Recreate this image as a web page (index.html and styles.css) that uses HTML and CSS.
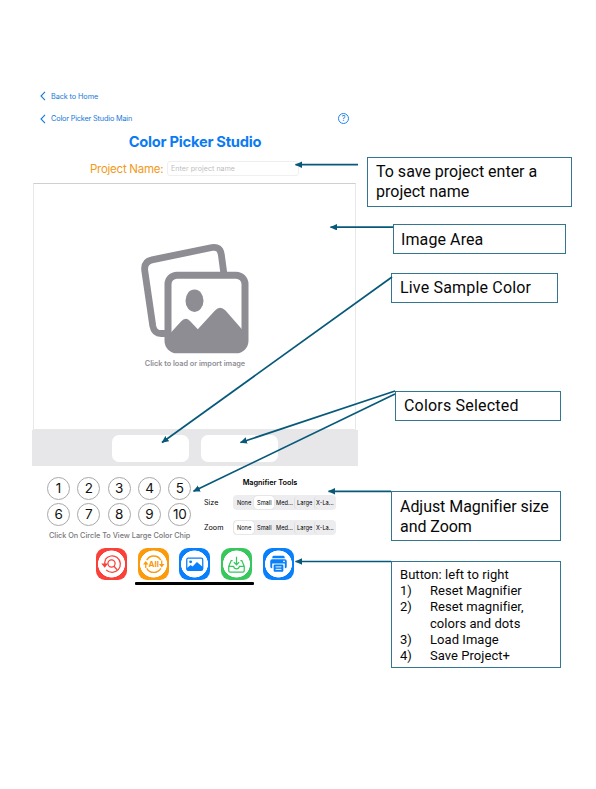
FILE: index.html
```html
<!DOCTYPE html>
<html lang="en">
<head>
<meta charset="utf-8">
<title>Color Picker Studio guide</title>
<link rel="stylesheet" href="styles.css">
</head>
<body>
<main class="page">
  <section class="app">
    <nav class="nav">
      <a class="back"><svg width="6" height="10" viewBox="0 0 6 10"><path d="M5 .8 1 5l4 4.2"/></svg><span class="t-home">Back to Home</span></a>
      <div class="nav-row">
        <a class="back"><svg width="6" height="10" viewBox="0 0 6 10"><path d="M5 .8 1 5l4 4.2"/></svg><span class="t-main">Color Picker Studio Main</span></a>
        <span class="help">?</span>
      </div>
    </nav>
    <h1><span>Color Picker Studio</span></h1>
    <div class="project"><span class="project-label">Project Name:</span><span class="field">Enter project name</span></div>
    <div class="image-area">
      <svg class="photos" width="110" height="112" viewBox="0 0 110 112">
        <path d="M26 90.500H21Q14.200 90.500 12.800 83L4.800 28Q3.500 18.500 12 16.800L72 4.500Q80 3 81.300 11.500L83.800 30" fill="none" stroke="#8e8d93" stroke-width="6.800"/>
        <rect x="28" y="32.200" width="77" height="74.600" rx="9" fill="#fff" stroke="#8e8d93" stroke-width="7"/>
        <ellipse cx="54.500" cy="57.700" rx="9" ry="11.200" fill="#8e8d93"/>
        <path d="M30 90.500 41 78.500Q45.500 73.500 50 78L57.800 86.300 75 67.500Q80 62 85.500 67.500L103 87.500V105H30Z" fill="#8e8d93"/>
      </svg>
      <span class="caption">Click to load or import image</span>
    </div>
    <div class="samples"><i></i><i></i></div>
    <div class="tools">
      <div class="colors">
        <div class="circles"><b>1</b><b>2</b><b>3</b><b>4</b><b>5</b><b>6</b><b>7</b><b>8</b><b>9</b><b>10</b></div>
        <span class="hint">Click On Circle To View Large Color Chip</span>
      </div>
      <div class="magnifier">
        <h2>Magnifier Tools</h2>
        <div class="tool-row"><label>Size</label><div class="segments"><span>None</span><span class="on">Small</span><span>Med...</span><span>Large</span><span>X-La...</span></div></div>
        <div class="tool-row"><label>Zoom</label><div class="segments"><span class="on">None</span><span>Small</span><span>Med...</span><span>Large</span><span>X-La...</span></div></div>
      </div>
    </div>
    <div class="buttons">
      <span class="btn red"><svg viewBox="0 0 32 32"><path d="M9.500 11.500A8.500 8.500 0 1 1 10.500 22"/><path class="fill" d="m5.500 15.500 3.500 4.300 3.500-4.300z"/><path d="M9 16.500q-.2-2.500.8-5"/><circle cx="16" cy="15.500" r="3.700"/><path d="m18.600 18.300 3.200 3.700"/></svg></span>
      <span class="btn orange"><svg viewBox="0 0 32 32"><path d="M9 12A8.300 8.300 0 0 1 23.500 12M23.500 20.500A8.300 8.300 0 0 1 9 20.500"/><path d="M8 20v-5M24.500 12.500v5"/><path class="fill" d="m5.200 16.500 2.800-3.700 2.800 3.700zM21.700 16l2.800 3.700 2.800-3.700z"/><text x="16.200" y="19.200">All</text></svg></span>
      <span class="btn blue"><svg viewBox="0 0 32 32"><rect x="8" y="10" width="16.500" height="12.500" rx="1.500"/><circle class="fill" cx="12" cy="13.800" r="1.500"/><path class="fill" d="m8 20.500 4-3.500 2 1.700 4.500-4.700 6 5v3.500H8z"/></svg></span>
      <span class="btn green"><svg viewBox="0 0 32 32"><path d="M12 12.500h-1.500L8 18.500V23q0 1.500 1.500 1.500h13q1.500 0 1.500-1.500v-4.500l-2.500-6H20M8 18.500h5q.5 2.500 3 2.500t3-2.500h5M16 8.500v8M13.300 14l2.700 2.800 2.700-2.800"/></svg></span>
      <span class="btn blue"><svg viewBox="0 0 32 32"><path class="fill" d="M11 7.500h10q1.500 0 1.500 2.500h-13q0-2.500 1.500-2.500zM9.500 11h13q2 0 2 2v5.500q0 2-2 2V15.500h-13v5q-2 0-2-2V13q0-2 2-2z"/><rect class="fill" x="11" y="16.500" width="10" height="7.500" rx="1"/><path class="cut" d="M13 19h6M13 21.500h6"/><circle cx="21.700" cy="13.200" r=".9" fill="#fff" stroke="none"/></svg></span>
    </div>
    <div class="home-bar"></div>
  </section>

  <aside class="notes">
    <p class="note save">To save project enter a<br>project name</p>
    <p class="note area">Image Area</p>
    <p class="note live">Live Sample Color</p>
    <p class="note selected">Colors Selected</p>
    <p class="note adjust">Adjust Magnifier size<br>and Zoom</p>
    <div class="note legend">
      <span>Button: left to right</span>
      <ol><li><i>1)</i><span>Reset Magnifier</span></li><li><i>2)</i><span>Reset magnifier,<br>colors and dots</span></li><li><i>3)</i><span>Load Image</span></li><li><i>4)</i><span>Save Project+</span></li></ol>
    </div>
  </aside>

  <svg class="arrows" width="596" height="789" viewBox="0 0 596 789">
    <defs><marker id="head" markerUnits="userSpaceOnUse" markerWidth="8" markerHeight="7" refX="6.500" refY="3.250" orient="auto"><path d="M0 0 7 3.250 0 6.500Z"/></marker></defs>
    <path class="arrow" d="M358 164.700H295.500"/>
    <path class="arrow" d="M393 227.200H330.500"/>
    <path class="arrow" d="M392 277 162 442.500"/>
    <path class="arrow" d="M395 391 240.500 442.500"/>
    <path class="arrow" d="M395 394 193.500 491.300"/>
    <path class="arrow" d="M391 491.300H328.500"/>
    <path class="arrow" d="M391 561.500H295.500"/>
  </svg>
</main>
</body>
</html>
```

FILE: styles.css
```css
* { box-sizing: border-box; }
body { margin: 0; background: #fff; font-family: Inter, "Liberation Sans", sans-serif; }
.page { position: relative; display: flex; width: 596px; height: 789px; overflow: hidden; }
.app { width: 326px; margin-left: 32px; padding-top: 85px; flex: none; }
.nav { padding: 0 9px 0 8px; color: #1679d8; font-size: 7.3px; letter-spacing: -.16px; }
.back { display: flex; align-items: center; gap: 5px; height: 22px; white-space: nowrap; }
.back svg { fill: none; stroke: #1679d8; stroke-width: 1.1; }
.t-home { letter-spacing: -.1px; }
.nav-row { display: flex; justify-content: space-between; align-items: center; height: 23px; }
.help { width: 11px; height: 11px; border: 1px solid #1c84ef; border-radius: 50%; font-size: 8px; line-height: 9px; text-align: center; letter-spacing: 0; }
h1 { margin: 0; height: 24px; font-size: 14.7px; line-height: 24px; font-weight: 700; text-align: center; color: #0b7bf3; white-space: nowrap; letter-spacing: -.25px; }
.project { display: flex; align-items: center; height: 29px; padding-left: 58px; gap: 4px; }
.project-label { width: 73px; font-size: 11.5px; color: #f39a18; white-space: nowrap; letter-spacing: -.26px; }
.field { width: 132px; height: 15px; border: 1px solid #efefef; border-radius: 3px; padding-left: 3px; font-size: 7px; line-height: 13px; color: #bdbdc0; letter-spacing: .08px; }
.image-area { display: flex; flex-direction: column; align-items: center; height: 247px; margin: 0 2px 0 1px; border: 1px solid #e8e8e8; border-top-color: #cfcfcf; padding: 59px 0 0 1px; }
.photos { display: block; flex: none; }
.caption { margin-top: 4px; font-size: 7.3px; line-height: 10px; font-weight: 600; color: #8e8d93; white-space: nowrap; letter-spacing: -.02px; }
.samples { display: flex; gap: 12px; height: 36px; padding: 5px 0 4px 80px; background: #e7e7e9; }
.samples i { width: 77px; border-radius: 7px; background: #fff; }
.tools { display: flex; height: 82.4px; }
.colors { width: 171px; padding: 10.6px 0 0 15px; }
.circles { display: grid; grid-template-columns: repeat(5, 23px); column-gap: 7.3px; row-gap: 3.4px; }
.circles b { width: 23px; height: 23px; border: 1px solid #a8a8a8; border-radius: 50%; font-size: 13.5px; line-height: 21.5px; font-weight: 400; text-align: center; color: #111; letter-spacing: -.2px; }
.hint { display: block; margin: 5.4px 0 0 2px; font-size: 7.3px; line-height: 10px; font-weight: 500; color: #77777a; white-space: nowrap; letter-spacing: -.01px; }
.magnifier { width: 134px; padding-top: 11px; }
h2 { margin: 0; font-size: 7.3px; line-height: 12px; font-weight: 600; text-align: center; }
.tool-row { display: flex; align-items: center; height: 15px; margin-top: 6px; }
.tool-row + .tool-row { margin-top: 10px; }
label { width: 30px; padding-left: 1px; font-size: 7.2px; }
.segments { display: grid; grid-template-columns: repeat(5, 1fr); width: 103px; height: 15px; padding: 1px; border-radius: 4px; background: #ededef; }
.segments span { border-radius: 3px; font-size: 5.7px; line-height: 13px; text-align: center; white-space: nowrap; font-weight: 400; }
.segments span:nth-child(n+4) { box-shadow: -1px 0 0 -.4px #d5d5d8; }
.segments .on { background: #fff; box-shadow: 0 0 1px #bbb; }
.buttons { display: flex; gap: 10.7px; padding-left: 64px; }
.btn { width: 31px; height: 32px; border-radius: 9px; background: currentColor; }
.btn svg { display: block; width: 31px; height: 32px; fill: none; stroke: currentColor; stroke-width: 1.3; background: radial-gradient(circle, #fff 13.2px, transparent 13.8px); }
.btn .fill { fill: currentColor; stroke: none; }
.btn .cut { stroke: #fff; stroke-width: 1; }
.btn text { fill: currentColor; stroke: none; font-size: 8.3px; font-weight: 700; text-anchor: middle; }
.red { color: #fa4039; }
.orange { color: #fb9a0b; }
.blue { color: #087ffb; }
.green { color: #37c75c; }
.home-bar { width: 119px; height: 3px; margin: 1.6px 0 0 103px; border-radius: 1px; background: #000; }

.notes { width: 215px; margin-left: 9px; padding-top: 157px; font-family: Roboto, "Liberation Sans", sans-serif; color: #080808; }
.note { margin: 0; border: 1px solid #34758f; padding: 4px 8px; background: #fff; font-size: 16px; line-height: 20px; white-space: nowrap; }
.save { width: 205px; height: 50px; }
.area { width: 173px; height: 30px; margin: 17px 0 0 26px; padding: 5px 7px; letter-spacing: .1px; }
.live { width: 167px; height: 30px; margin: 19px 0 0 24px; letter-spacing: .18px; }
.selected { width: 166px; height: 30px; margin: 88px 0 0 28px; letter-spacing: .2px; }
.adjust { width: 170px; height: 50px; margin: 70px 0 0 24px; padding-top: 5px; letter-spacing: -.05px; }
.legend { width: 170px; height: 107px; margin: 20px 0 0 24px; font-size: 13px; line-height: 16.2px; padding-top: 5px; letter-spacing: .05px; }
.legend ol { list-style: none; margin: 0; padding: 0; }
.legend li { display: flex; }
.legend i { width: 30px; font-style: normal; }
.arrows { position: absolute; left: 0; top: 0; pointer-events: none; fill: none; stroke: #07597a; stroke-width: 1.7; }
.arrow { marker-end: url(#head); }
marker path { fill: #07597a; stroke: none; }
```
